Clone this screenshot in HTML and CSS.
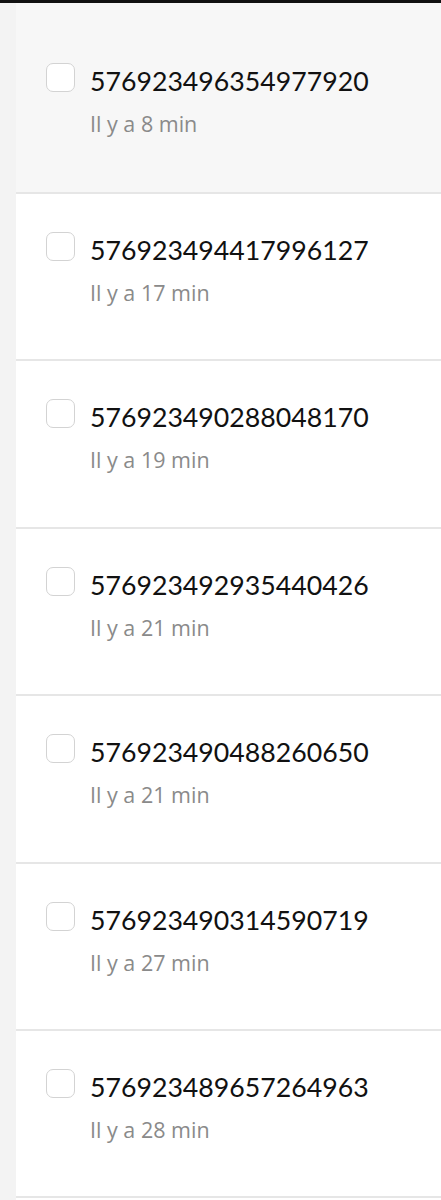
FILE: index.html
```html
<!DOCTYPE html>
<html lang="fr">
<head>
  <meta charset="UTF-8" />
  <meta name="viewport" content="width=device-width, initial-scale=1.0"/>
  <title>Commandes</title>
  <link rel="stylesheet" href="styles.css">
</head>
<body>
  <div class="topbar"></div>

  <div class="page">
    <div class="rail"></div>

    <ul class="orders">
      <li class="order selected">
        <span class="check"></span>
        <div class="info">
          <div class="number">576923496354977920</div>
          <div class="time">Il y a 8 min</div>
        </div>
      </li>
      <li class="order">
        <span class="check"></span>
        <div class="info">
          <div class="number">576923494417996127</div>
          <div class="time">Il y a 17 min</div>
        </div>
      </li>
      <li class="order">
        <span class="check"></span>
        <div class="info">
          <div class="number">576923490288048170</div>
          <div class="time">Il y a 19 min</div>
        </div>
      </li>
      <li class="order">
        <span class="check"></span>
        <div class="info">
          <div class="number">576923492935440426</div>
          <div class="time">Il y a 21 min</div>
        </div>
      </li>
      <li class="order">
        <span class="check"></span>
        <div class="info">
          <div class="number">576923490488260650</div>
          <div class="time">Il y a 21 min</div>
        </div>
      </li>
      <li class="order">
        <span class="check"></span>
        <div class="info">
          <div class="number">576923490314590719</div>
          <div class="time">Il y a 27 min</div>
        </div>
      </li>
      <li class="order">
        <span class="check"></span>
        <div class="info">
          <div class="number">576923489657264963</div>
          <div class="time">Il y a 28 min</div>
        </div>
      </li>
    </ul>
  </div>
</body>
</html>
```

FILE: styles.css
```css
body {
  margin: 0;
  background: #fff;
  font-family: Lato, 'Noto Sans', sans-serif;
  color: #111;
}

.topbar {
  height: 3px;
  background: #111;
}

.page {
  display: flex;
  min-height: 1197px;
}

.rail {
  width: 16px;
  flex-shrink: 0;
  background: #f3f3f3;
}

.orders {
  flex: 1;
  list-style: none;
  margin: 0;
  padding: 0;
}

.order {
  display: flex;
  align-items: flex-start;
  gap: 15px;
  padding: 38px 30px 52.4px;
  border-bottom: 2px solid #e6e6e6;
  background: #fff;
}

.order.selected {
  padding-top: 60px;
  padding-bottom: 54px;
  background: #f7f7f7;
}

.check {
  width: 27px;
  height: 27px;
  flex-shrink: 0;
  border: 1.5px solid #d3d3d3;
  border-radius: 7px;
  background: #fff;
}

.info {
  padding-top: 2px;
}

.number {
  font-size: 26.7px;
  line-height: 32px;
  color: #111;
}

.time {
  margin-top: 13px;
  font-family: 'Open Sans', 'Noto Sans', sans-serif;
  font-size: 21.5px;
  line-height: 28px;
  color: #8a8a8a;
}
```
